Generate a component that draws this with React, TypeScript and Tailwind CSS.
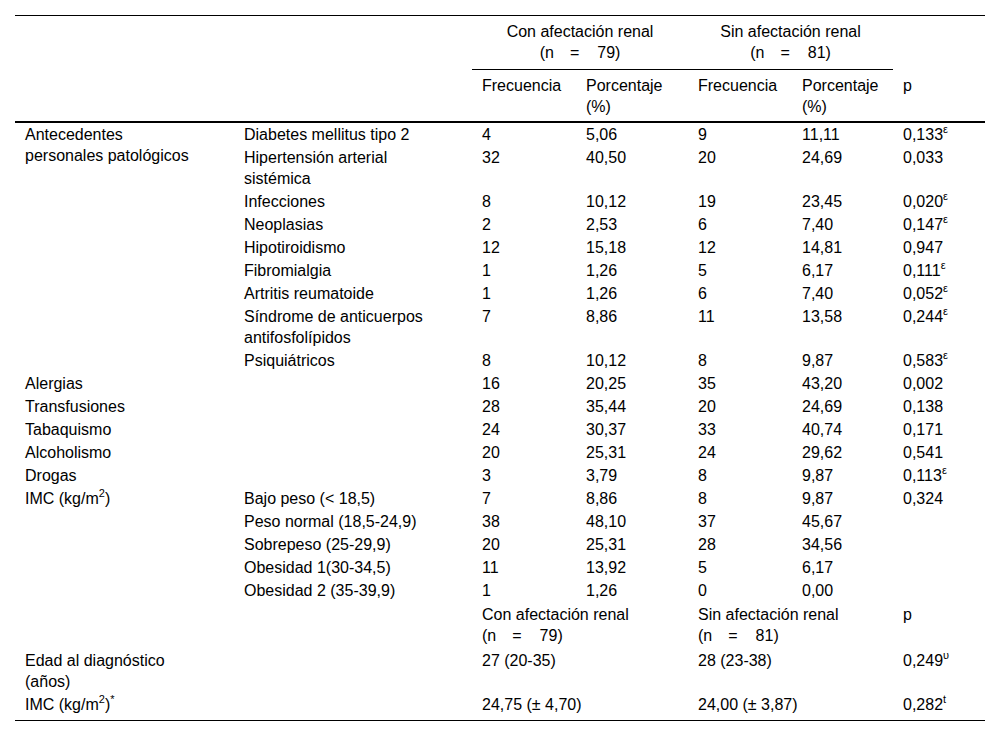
import React from "react";

const cell = "align-top text-left font-normal pl-[10px] pr-[10px] py-px";

function Sup({ children }: { children: React.ReactNode }) {
  return <sup className="text-[11px] top-[-7px]">{children}</sup>;
}

function N({ n }: { n: string }) {
  return (
    <span className="whitespace-nowrap">
      (n<span className="inline-block w-[16px]" />=<span className="inline-block w-[18px]" />
      {n})
    </span>
  );
}

type Row = {
  a?: React.ReactNode;
  span?: number;
  b?: React.ReactNode;
  v: [string, string, string, string];
  p?: React.ReactNode;
};

const eps = <Sup>ε</Sup>;

const rows: Row[] = [
  { a: "Antecedentes personales patológicos", span: 9, b: "Diabetes mellitus tipo 2", v: ["4", "5,06", "9", "11,11"], p: <>0,133{eps}</> },
  { b: "Hipertensión arterial sistémica", v: ["32", "40,50", "20", "24,69"], p: "0,033" },
  { b: "Infecciones", v: ["8", "10,12", "19", "23,45"], p: <>0,020{eps}</> },
  { b: "Neoplasias", v: ["2", "2,53", "6", "7,40"], p: <>0,147{eps}</> },
  { b: "Hipotiroidismo", v: ["12", "15,18", "12", "14,81"], p: "0,947" },
  { b: "Fibromialgia", v: ["1", "1,26", "5", "6,17"], p: <>0,111{eps}</> },
  { b: "Artritis reumatoide", v: ["1", "1,26", "6", "7,40"], p: <>0,052{eps}</> },
  { b: "Síndrome de anticuerpos antifosfolípidos", v: ["7", "8,86", "11", "13,58"], p: <>0,244{eps}</> },
  { b: "Psiquiátricos", v: ["8", "10,12", "8", "9,87"], p: <>0,583{eps}</> },
  { a: "Alergias", b: "", v: ["16", "20,25", "35", "43,20"], p: "0,002" },
  { a: "Transfusiones", b: "", v: ["28", "35,44", "20", "24,69"], p: "0,138" },
  { a: "Tabaquismo", b: "", v: ["24", "30,37", "33", "40,74"], p: "0,171" },
  { a: "Alcoholismo", b: "", v: ["20", "25,31", "24", "29,62"], p: "0,541" },
  { a: "Drogas", b: "", v: ["3", "3,79", "8", "9,87"], p: <>0,113{eps}</> },
  { a: <>IMC (kg/m<Sup>2</Sup>)</>, span: 5, b: "Bajo peso (< 18,5)", v: ["7", "8,86", "8", "9,87"], p: "0,324" },
  { b: "Peso normal (18,5-24,9)", v: ["38", "48,10", "37", "45,67"] },
  { b: "Sobrepeso (25-29,9)", v: ["20", "25,31", "28", "34,56"] },
  { b: "Obesidad 1(30-34,5)", v: ["11", "13,92", "5", "6,17"] },
  { b: "Obesidad 2 (35-39,9)", v: ["1", "1,26", "0", "0,00"] },
];

export default function App() {
  return (
    <div className="min-h-[737px] w-[1000px] bg-white text-black font-['Liberation_Sans',Arial,Helvetica,sans-serif]">
      <div className="pt-[15px] pl-[15px]">
        <table className="w-[970px] table-fixed border-collapse text-[16px] leading-[21px]">
          <colgroup>
            <col className="w-[219px]" />
            <col className="w-[238px]" />
            <col className="w-[104px]" />
            <col className="w-[112px]" />
            <col className="w-[104px]" />
            <col className="w-[101px]" />
            <col className="w-[92px]" />
          </colgroup>
          <thead>
            <tr>
              <td colSpan={2} className="border-t border-black" />
              <th colSpan={2} className="border-t border-b border-black text-center font-normal align-top pt-[5px] pb-[6px] px-[10px]">
                <div>Con afectación renal</div>
                <div><N n="79" /></div>
              </th>
              <th colSpan={2} className="border-t border-b border-black text-center font-normal align-top pt-[5px] pb-[6px] px-[10px]">
                <div>Sin afectación renal</div>
                <div><N n="81" /></div>
              </th>
              <td className="border-t border-black" />
            </tr>
            <tr>
              <td colSpan={2} className="border-b-2 border-black" />
              <th className={`${cell} border-b-2 border-black pt-[5px] pb-[4px]`}>Frecuencia</th>
              <th className={`${cell} border-b-2 border-black pt-[5px] pb-[4px]`}>Porcentaje (%)</th>
              <th className={`${cell} border-b-2 border-black pt-[5px] pb-[4px]`}>Frecuencia</th>
              <th className={`${cell} border-b-2 border-black pt-[5px] pb-[4px]`}>Porcentaje (%)</th>
              <th className={`${cell} border-b-2 border-black pt-[5px] pb-[4px]`}>p</th>
            </tr>
          </thead>
          <tbody>
            {rows.map((r, i) => (
              <tr key={i}>
                {r.a !== undefined && (
                  <td rowSpan={r.span ?? 1} className={`${cell} pr-[40px]`}>{r.a}</td>
                )}
                <td className={`${cell} pr-[30px]`}>{r.b}</td>
                <td className={cell}>{r.v[0]}</td>
                <td className={cell}>{r.v[1]}</td>
                <td className={cell}>{r.v[2]}</td>
                <td className={cell}>{r.v[3]}</td>
                <td className={cell}>{r.p}</td>
              </tr>
            ))}
            <tr>
              <td className={`${cell} pt-[2px] pb-[3px]`} />
              <td className={`${cell} pt-[2px] pb-[3px]`} />
              <td colSpan={2} className={`${cell} pt-[2px] pb-[3px]`}>
                <div>Con afectación renal</div>
                <div><N n="79" /></div>
              </td>
              <td colSpan={2} className={`${cell} pt-[2px] pb-[3px]`}>
                <div>Sin afectación renal</div>
                <div><N n="81" /></div>
              </td>
              <td className={`${cell} pt-[2px] pb-[3px]`}>p</td>
            </tr>
            <tr>
              <td className={`${cell} pr-[40px]`}>Edad al diagnóstico (años)</td>
              <td className={cell} />
              <td colSpan={2} className={cell}>27 (20-35)</td>
              <td colSpan={2} className={cell}>28 (23-38)</td>
              <td className={cell}>0,249<Sup>υ</Sup></td>
            </tr>
            <tr>
              <td className={`${cell} pr-[40px] pb-[5px] border-b border-black`}>IMC (kg/m<Sup>2</Sup>)<Sup>*</Sup></td>
              <td className={`${cell} pb-[5px] border-b border-black`} />
              <td colSpan={2} className={`${cell} pb-[5px] border-b border-black`}>24,75 (± 4,70)</td>
              <td colSpan={2} className={`${cell} pb-[5px] border-b border-black`}>24,00 (± 3,87)</td>
              <td className={`${cell} pb-[5px] border-b border-black`}>0,282<Sup>t</Sup></td>
            </tr>
          </tbody>
        </table>
      </div>
    </div>
  );
}
